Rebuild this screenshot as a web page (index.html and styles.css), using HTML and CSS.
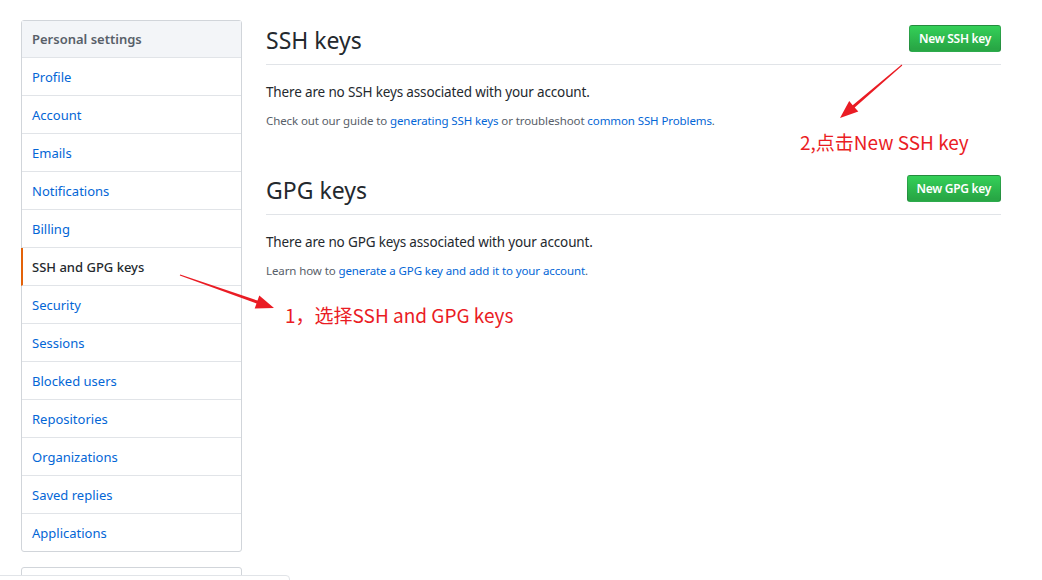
FILE: index.html
```html
<!DOCTYPE html>
<html>
<head>
<meta charset="utf-8">
<link rel="stylesheet" href="styles.css">
</head>
<body>
<div class="page">
  <aside class="side">
    <nav class="menu">
      <div class="menu-head">Personal settings</div>
      <a class="menu-item">Profile</a>
      <a class="menu-item">Account</a>
      <a class="menu-item">Emails</a>
      <a class="menu-item">Notifications</a>
      <a class="menu-item">Billing</a>
      <a class="menu-item selected">SSH and GPG keys</a>
      <a class="menu-item">Security</a>
      <a class="menu-item">Sessions</a>
      <a class="menu-item">Blocked users</a>
      <a class="menu-item">Repositories</a>
      <a class="menu-item">Organizations</a>
      <a class="menu-item">Saved replies</a>
      <a class="menu-item">Applications</a>
    </nav>
    <div class="menu2"></div>
  </aside>
  <main class="main">
    <section class="block">
      <div class="subhead">
        <h2 class="subhead-title">SSH keys</h2>
        <button class="btn">New SSH key</button>
      </div>
      <p class="lead">There are no SSH keys associated with your account.</p>
      <p class="note">Check out our guide to <a>generating SSH keys</a> or troubleshoot <a>common SSH Problems</a>.</p>
    </section>
    <section class="block">
      <div class="subhead">
        <h2 class="subhead-title">GPG keys</h2>
        <button class="btn">New GPG key</button>
      </div>
      <p class="lead">There are no GPG keys associated with your account.</p>
      <p class="note">Learn how to <a>generate a GPG key and add it to your account</a>.</p>
    </section>
  </main>
</div>
<div class="bottom-bar"></div>
<svg class="marks" width="1042" height="580" viewBox="0 0 1042 580">
  <polygon fill="#ea1c24" points="179.8,275.5 256.5,303.4 254.7,308.6 274,308 259.3,295.4 257.5,300.6 180.2,274.5"/>
  <polygon fill="#ea1c24" points="901.7,64.6 852.7,105.2 849.2,101.0 840,118 858.3,111.6 854.7,107.4 902.3,65.4"/>
</svg>
<div class="anno anno1">1，选择SSH and GPG keys</div>
<div class="anno anno2">2,点击New SSH key</div>
</body>
</html>
```

FILE: styles.css
```css
html, body {
  margin: 0;
  padding: 0;
  background: #fff;
}
body {
  font-family: "Noto Sans", "Liberation Sans", "Noto Sans CJK SC", sans-serif;
  color: #24292e;
  width: 1042px;
  height: 580px;
  overflow: hidden;
  position: relative;
}
.page {
  display: flex;
  padding: 20px 0 0 21px;
  gap: 24px;
}
.side {
  width: 221px;
  flex: none;
}
.menu {
  border: 1px solid #d1d5da;
  border-radius: 3px;
  display: flex;
  flex-direction: column;
}
.menu-head {
  height: 37px;
  box-sizing: border-box;
  padding: 10px 10px;
  font-size: 13px;
  line-height: 17px;
  font-weight: 600;
  color: #586069;
  background: #f3f5f8;
  border-bottom: 1px solid #e1e4e8;
}
.menu-item {
  height: 38px;
  box-sizing: border-box;
  padding: 11px 10px 9px;
  font-size: 13px;
  line-height: 17px;
  color: #0366d6;
  border-bottom: 1px solid #e1e4e8;
}
.menu-item:last-child {
  border-bottom: 0;
  height: 37px;
}
.menu-item.selected {
  color: #24292e;
  font-weight: 500;
  border-left: 2px solid #e36209;
  margin-left: -1px;
  padding-left: 9px;
}
.menu2 {
  margin-top: 15px;
  height: 30px;
  border: 1px solid #d1d5da;
  border-radius: 3px;
}
.main {
  width: 735px;
  flex: none;
}
.block {
  margin-bottom: 41px;
}
.subhead {
  display: flex;
  align-items: center;
  justify-content: space-between;
  height: 45px;
  box-sizing: border-box;
  padding-bottom: 5px;
  border-bottom: 1px solid #e1e4e8;
}
.subhead-title {
  margin: 0;
  font-size: 23px;
  font-weight: 400;
  line-height: 30px;
  color: #24292e;
}
.btn {
  font-family: inherit;
  font-size: 12px;
  font-weight: 600;
  letter-spacing: -0.3px;
  color: #fff;
  height: 27px;
  padding: 0 9px;
  border: 1px solid rgba(27, 31, 35, 0.2);
  border-radius: 3px;
  background: linear-gradient(#34d058, #28a745 90%);
  margin-bottom: 2px;
}
.lead {
  margin: 18px 0 0;
  font-size: 13.5px;
  line-height: 18px;
  letter-spacing: -0.15px;
}
.note {
  margin: 12px 0 0;
  font-size: 11.5px;
  line-height: 16px;
  letter-spacing: -0.1px;
  color: #586069;
}
.note a {
  color: #0366d6;
}
.bottom-bar {
  position: absolute;
  left: -10px;
  top: 575px;
  width: 298px;
  height: 20px;
  border: 1px solid #e1e4e8;
  border-radius: 4px;
  background: #fff;
}
.marks {
  position: absolute;
  left: 0;
  top: 0;
  pointer-events: none;
}
.anno {
  position: absolute;
  font-family: "Noto Sans CJK SC", sans-serif;
  font-size: 19px;
  line-height: 24px;
  color: #ea1c24;
  white-space: nowrap;
}
.anno1 {
  left: 285px;
  top: 303px;
}
.anno2 {
  left: 800px;
  top: 130px;
}
```
